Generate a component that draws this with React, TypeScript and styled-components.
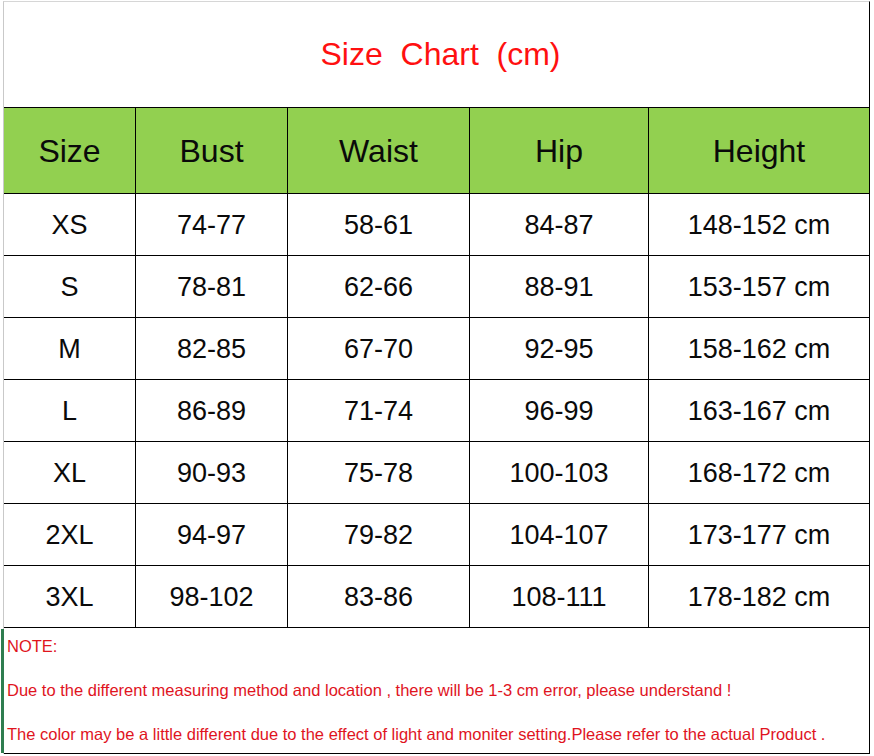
import React from 'react';
import styled, { createGlobalStyle } from 'styled-components';

const columns = ['Size', 'Bust', 'Waist', 'Hip', 'Height'];

const rows = [
  ['XS', '74-77', '58-61', '84-87', '148-152 cm'],
  ['S', '78-81', '62-66', '88-91', '153-157 cm'],
  ['M', '82-85', '67-70', '92-95', '158-162 cm'],
  ['L', '86-89', '71-74', '96-99', '163-167 cm'],
  ['XL', '90-93', '75-78', '100-103', '168-172 cm'],
  ['2XL', '94-97', '79-82', '104-107', '173-177 cm'],
  ['3XL', '98-102', '83-86', '108-111', '178-182 cm'],
];

const notes = [
  'NOTE:',
  'Due to the different measuring method and location , there will be 1-3 cm error, please understand !',
  'The color may be a little different due to the effect of light and moniter setting.Please refer to the actual Product .',
];

export default function App() {
  return (
    <>
      <GlobalStyle />
      <PAGE>
        <SHEET>
          <TITLE>Size&nbsp; Chart&nbsp; (cm)</TITLE>
          <GRID>
            {columns.map((col) => (
              <HEAD_CELL key={col}>{col}</HEAD_CELL>
            ))}
            {rows.map((row) =>
              row.map((value, i) => <CELL key={row[0] + i}>{value}</CELL>)
            )}
          </GRID>
          <NOTES>
            {notes.map((note) => (
              <NOTE_LINE key={note}>{note}</NOTE_LINE>
            ))}
          </NOTES>
        </SHEET>
      </PAGE>
    </>
  );
}

const GlobalStyle = createGlobalStyle`
  html, body {
    margin: 0;
    padding: 0;
    background: #fff;
  }
  body {
    font-family: 'Liberation Sans', Arial, sans-serif;
  }
`;

const PAGE = styled.div`
  width: 874px;
  height: 756px;
  padding: 1px 0 0 3px;
  box-sizing: border-box;
  overflow: hidden;
  background: #fff;
`;

const SHEET = styled.div`
  width: 867px;
  box-sizing: border-box;
  border-top: 1px solid #d6d6d6;
  border-left: 1px solid #c9c9c9;
  border-right: 1px solid #000;
`;

const TITLE = styled.div`
  height: 105px;
  display: flex;
  align-items: center;
  justify-content: center;
  border-bottom: 1px solid #000;
  font-size: 32px;
  color: #ff1010;
  padding-left: 8px;
`;

const GRID = styled.div`
  display: grid;
  grid-template-columns: 131px 151px 181px 178px 220px;
  grid-template-rows: 85px;
  grid-auto-rows: 61px;
  gap: 1px;
  background: #000;
  border-bottom: 1px solid #000;
`;

const HEAD_CELL = styled.div`
  display: flex;
  align-items: center;
  justify-content: center;
  background: #92d050;
  font-size: 32px;
  color: #0a0a0a;
  padding-top: 2px;
`;

const CELL = styled.div`
  display: flex;
  align-items: center;
  justify-content: center;
  background: #fff;
  font-size: 27px;
  color: #0a0a0a;
  padding-top: 2px;
`;

const NOTES = styled.div`
  display: grid;
  grid-template-rows: 36px 52px 37px;
  border-bottom: 1px solid #000;
  box-shadow: -4px 0 0 -1px #2e7d4f;
`;

const NOTE_LINE = styled.div`
  display: flex;
  align-items: center;
  padding-left: 3px;
  font-size: 16.5px;
  color: #e0141e;
  white-space: nowrap;
`;
